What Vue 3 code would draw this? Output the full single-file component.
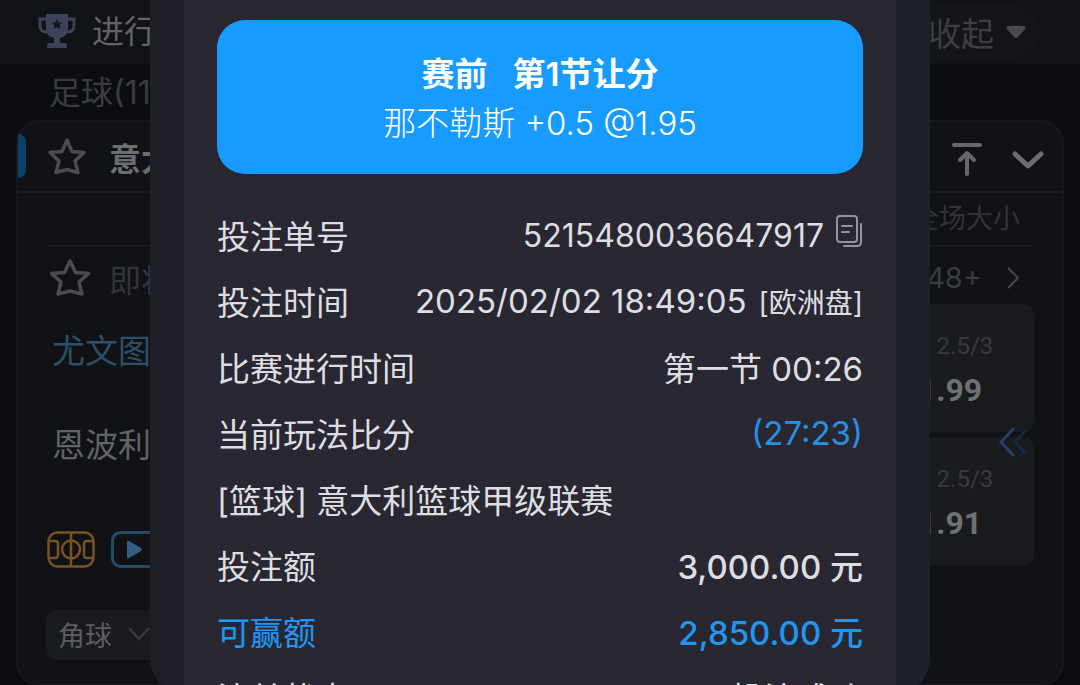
<script setup>
const details = [
  { label: '投注单号', value: '5215480036647917', copy: true, kind: 'order' },
  { label: '投注时间', value: '2025/02/02 18:49:05', note: '[欧洲盘]' },
  { label: '比赛进行时间', value: '第一节 00:26' },
  { label: '当前玩法比分', value: '(27:23)', kind: 'score' },
  { label: '[篮球] 意大利篮球甲级联赛' },
  { label: '投注额', value: '3,000.00 元', kind: 'stake' },
  { label: '可赢额', value: '2,850.00 元', kind: 'win' },
  { label: '注单状态', value: '投注成功' },
]
const odds = [
  { side: '大', line: '2.5/3', price: '1.99' },
  { side: '小', line: '2.5/3', price: '1.91' },
]
</script>

<template>
  <div class="app">
    <main class="page">
      <header class="topbar">
        <svg class="trophy" viewBox="0 0 38 38" width="38" height="38">
          <path d="M8 6H2v7q0 6 7 6M30 6h6v7q0 6-7 6" fill="none" stroke="#3d4359" stroke-width="3" />
          <path d="M8 1h22v14q0 8-8 10v5h5q2 0 2 5H9q0-5 2-5h5v-5q-8-2-8-10z" fill="#3d4359" />
          <path d="M19 6l1.600 3.400 3.700.4-2.700 2.500.7 3.700-3.300-1.800-3.300 1.800.7-3.700-2.700-2.500 3.700-.4z" fill="#15161c" />
        </svg>
        <span class="topbar-title">进行中</span>
        <button class="collapse" type="button">
          全部收起
          <svg viewBox="0 0 20 14" width="20" height="14"><path d="M2 1h16q2 1 1 3l-7 8q-2 2-4 0L1 4Q0 2 2 1z" fill="#4a4a4d" /></svg>
        </button>
      </header>
      <p class="sport">足球(11)</p>

      <section class="card">
        <header class="league">
          <svg class="star" viewBox="0 0 40 40" width="40" height="40"><path d="M20 3l5 11.500 12 1-9 8.500 3 11.500-11-3-11 3 3-11.500-9-8.500 12-1z" fill="none" stroke="#4b4c50" stroke-width="3.500" stroke-linejoin="round" /></svg>
          <h2>意大利甲级联赛</h2>
          <button class="icon-button" type="button" aria-label="置顶">
            <svg viewBox="0 0 30 34" width="30" height="34"><path d="M2 3h26M15 32V12M8 18l7-7 7 7" fill="none" stroke="#66676b" stroke-width="4" stroke-linecap="round" stroke-linejoin="round" /></svg>
          </button>
          <button class="icon-button" type="button" aria-label="收起联赛">
            <svg viewBox="0 0 32 34" width="32" height="34"><path d="M3 12l13 12 13-12" fill="none" stroke="#6c6d70" stroke-width="5" stroke-linecap="round" stroke-linejoin="round" /></svg>
          </button>
        </header>
        <div class="body">
          <div class="markets">全场大小</div>
          <div class="status">
            <svg class="star" viewBox="0 0 42 40" width="42" height="40"><path d="M21 3l5.500 11.500 13 1-9.500 8.500 3 12-12-3-12 3 3-12-9.500-8.500 13-1z" fill="none" stroke="#4b4c50" stroke-width="3.500" stroke-linejoin="round" /></svg>
            <span>即将开赛</span>
            <a href="#" class="more">
              48+
              <svg viewBox="0 0 14 24" width="14" height="24"><path d="M2 2l10 10L2 22" fill="none" stroke="#48494c" stroke-width="2" /></svg>
            </a>
          </div>
          <div class="match">
            <div class="teams">
              <p class="home">尤文图斯</p>
              <p class="away">恩波利</p>
              <div class="media">
                <svg viewBox="0 0 48 37" width="48" height="37"><g fill="none" stroke="#795324" stroke-width="2.500"><rect x="1.500" y="1.500" width="45" height="34" rx="9" /><path d="M24 2v33M2 10h6q3 0 3 3v11q0 3-3 3H2M46 10h-6q-3 0-3 3v11q0 3 3 3h6" /><circle cx="24" cy="18.500" r="9" /></g></svg>
                <svg viewBox="0 0 48 37" width="48" height="37"><rect x="1.500" y="1.500" width="45" height="34" rx="8" fill="none" stroke="#264b66" stroke-width="3" /><path d="M16 11q0-2 2-1l12 7q2 1.500 0 3l-12 7q-2 1-2-1z" fill="#335f87" /></svg>
              </div>
            </div>
            <div class="odds">
              <button v-for="item in odds" :key="item.side" class="odd" type="button">
                <span class="line">{{ item.side }} {{ item.line }}</span>
                <strong>{{ item.price }}</strong>
              </button>
              <svg class="swipe" viewBox="0 0 30 32" width="30" height="32"><path d="M16 2L3 16l13 14" fill="none" stroke="#263f6d" stroke-width="3" /><path d="M28 4L17 16l11 12" fill="none" stroke="#1a2743" stroke-width="3" /></svg>
            </div>
          </div>
          <button class="corner" type="button">
            角球
            <svg viewBox="0 0 22 14" width="22" height="14"><path d="M1 1l10 11L21 1" fill="none" stroke="#3c3d40" stroke-width="2" /></svg>
          </button>
        </div>
      </section>
    </main>

    <div class="overlay">
      <div class="dialog" role="dialog" aria-label="注单详情">
        <div class="slip">
          <div class="pick">
            <h1><span>赛前</span><span>第1节让分</span></h1>
            <p>那不勒斯 +0.5 @1.95</p>
          </div>
          <dl>
            <div v-for="row in details" :key="row.label" class="row" :class="row.kind">
              <dt>{{ row.label }}</dt>
              <dd v-if="row.value">
                {{ row.value }}
                <small v-if="row.note">{{ row.note }}</small>
                <button v-if="row.copy" class="copy" type="button" aria-label="复制单号">
                  <svg viewBox="0 0 27 32" width="27" height="32"><g fill="none" stroke="#94949c" stroke-width="2" stroke-linecap="round"><rect x="1" y="1" width="20" height="26" rx="3" /><path d="M6 11h10M6 17h7" /><path d="M25 9v18q0 4-4 4H8" /></g></svg>
                </button>
              </dd>
            </div>
          </dl>
        </div>
      </div>
    </div>
  </div>
</template>

<style>
body {
  background: #0c0d11;
}
</style>

<style scoped>
.app {
  position: relative;
  height: 100vh;
  overflow: hidden;
  font-family: Inter, "Noto Sans CJK SC", sans-serif;
}
* {
  box-sizing: border-box;
}
h1, h2, p, dl, dt, dd {
  margin: 0;
}
button {
  border: 0;
  padding: 0;
  background: none;
  color: inherit;
  font: inherit;
}
svg {
  display: block;
  flex: none;
}
.page {
  color: #626365;
}
.topbar {
  display: flex;
  align-items: center;
  height: 64px;
  padding: 0 40px 0 38px;
  background: #121316;
}
.topbar-title {
  margin-left: 16px;
  font-size: 32px;
  line-height: 64px;
}
.collapse {
  display: flex;
  align-items: center;
  gap: 12px;
  height: 56px;
  margin-left: auto;
  padding: 0 14px 0 28px;
  border-radius: 28px;
  background: #141518;
  color: #3d3e41;
  font-size: 33px;
}
.sport {
  padding: 2px 0 0 49px;
  color: #3b3c3f;
  font-size: 32px;
  line-height: 54px;
}
.card {
  margin: 0 16px;
  border: 2px solid #17181c;
  border-radius: 24px;
  background: #111216;
}
.league {
  position: relative;
  display: flex;
  align-items: center;
  height: 71px;
  padding: 0 18px 0 29px;
  border-bottom: 2px solid #1b1c20;
}
.league::before {
  content: "";
  position: absolute;
  left: 0;
  top: 12px;
  width: 8px;
  height: 44px;
  border-radius: 0 8px 8px 0;
  background: #0a4269;
}
.league h2 {
  flex: 1;
  margin-left: 22px;
  padding-top: 6px;
  color: #6d6e70;
  font-size: 32px;
  font-weight: 700;
  line-height: 40px;
}
.icon-button {
  padding-top: 4px;
}
.icon-button + .icon-button {
  margin-left: 30px;
}
.body {
  padding: 0 28px 24px;
}
.markets {
  padding-right: 14px;
  border-bottom: 2px solid #18191d;
  color: #323336;
  font-size: 27px;
  line-height: 52px;
  text-align: right;
}
.status {
  display: flex;
  align-items: center;
  height: 57px;
  padding: 4px 14px 0 3px;
  color: #343538;
  font-size: 32px;
}
.status span {
  margin-left: 18px;
}
.more {
  display: flex;
  align-items: center;
  gap: 24px;
  margin-left: auto;
  color: #3a3b3e;
  font-size: 29px;
  text-decoration: none;
}
.match {
  display: grid;
  grid-template-columns: 1fr 168px;
}
.teams {
  font-size: 33px;
}
.teams p {
  padding-left: 6px;
  line-height: 94px;
}
.home {
  color: #2e4f69;
}
.media {
  display: flex;
  gap: 16px;
  padding: 39px 0 0 1px;
}
.odds {
  position: relative;
  display: flex;
  flex-direction: column;
  gap: 5px;
}
.odd {
  display: flex;
  flex-direction: column;
  align-items: center;
  height: 128px;
  padding-top: 20px;
  border-radius: 10px;
  background: #1a1b1e;
  color: #38393c;
  font-family: "Liberation Sans Narrow", Roboto, "Noto Sans CJK SC", sans-serif;
  font-size: 24px;
  line-height: 44px;
}
.odd strong {
  color: #707173;
  font-size: 32px;
  font-weight: 700;
}
.swipe {
  position: absolute;
  right: 6px;
  top: calc(50% - 10px);
}
.corner {
  display: flex;
  align-items: center;
  gap: 16px;
  height: 50px;
  margin-top: 42px;
  padding: 0 14px 2px 12px;
  border-radius: 10px;
  background: #1a1b1f;
  color: #5d5e61;
  font-size: 27px;
}
.overlay {
  position: absolute;
  inset: 0;
  display: flex;
  padding: 0 150px;
}
.dialog {
  flex: 1;
  height: calc(100% + 12px);
  padding: 0 34px;
  overflow: hidden;
  border-radius: 0 0 40px 40px;
  background: linear-gradient(90deg, #1f1f28, #1d2129);
}
.slip {
  min-height: 100%;
  padding: 20px 33px 0;
  background: #292832;
  color: #dedee2;
}
.pick {
  height: 154px;
  padding-top: 30px;
  border-radius: 28px;
  background: #189bff;
  color: #fff;
  text-align: center;
}
.pick h1 {
  display: flex;
  justify-content: center;
  gap: 25px;
  font-size: 33px;
  font-weight: 600;
  line-height: 49px;
}
.pick p {
  font-size: 33px;
  font-weight: 300;
  line-height: 49px;
}
dl {
  margin-top: 28px;
}
.row {
  display: flex;
  align-items: center;
  justify-content: space-between;
  height: 66px;
  font-size: 33px;
  white-space: nowrap;
}
dd {
  display: flex;
  align-items: center;
  gap: 12px;
}
.order dd {
  font-size: 32px;
}
small {
  font-size: 28px;
}
.copy {
  margin-bottom: 8px;
}
.score dd {
  color: #2790e2;
}
.stake dd,
.win dd {
  font-weight: 500;
}
.win {
  color: #2196f3;
}
</style>
